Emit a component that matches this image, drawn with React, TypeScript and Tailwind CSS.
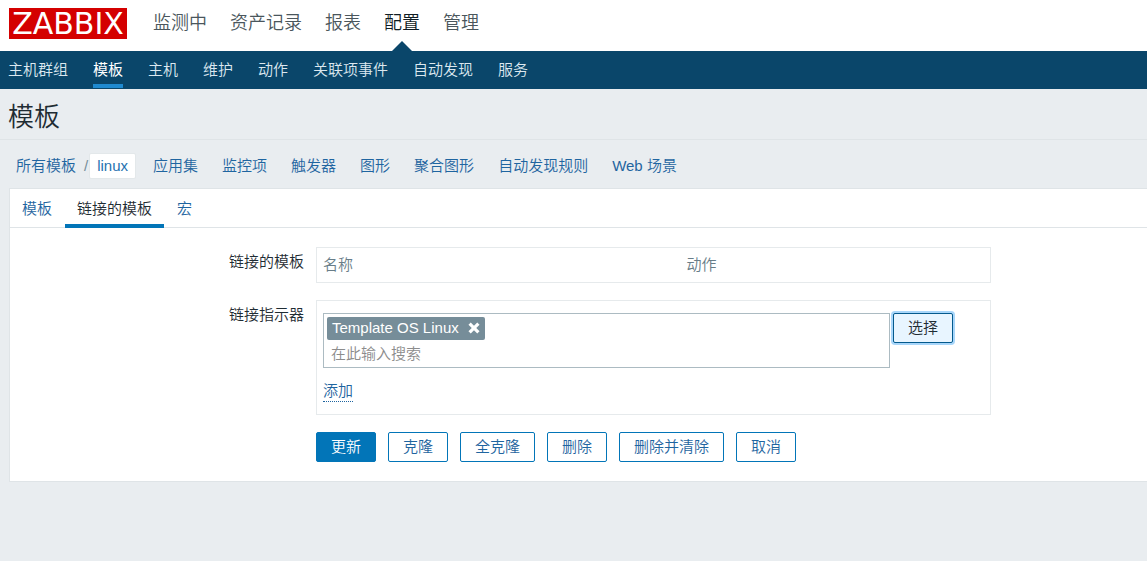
import React, { useState } from 'react';
import clsx from 'clsx';

const mainMenu = ['监测中', '资产记录', '报表', '配置', '管理'];
const subMenu = ['主机群组', '模板', '主机', '维护', '动作', '关联项事件', '自动发现', '服务'];
const templateLinks = ['应用集', '监控项', '触发器', '图形', '聚合图形', '自动发现规则', 'Web 场景'];
const tabs = ['模板', '链接的模板', '宏'];
const actions = ['克隆', '全克隆', '删除', '删除并清除', '取消'];

const Header = () => (
  <header>
    <div className="flex h-[51px] items-start bg-white pl-[9px]">
      <a
        href="#"
        className="mt-2 flex h-[31px] w-[118px] shrink-0 items-center justify-center bg-[#d40000] font-['DejaVu_Sans',sans-serif] text-[30px] leading-none font-normal text-white"
      >
        ZABBIX
      </a>
      <nav className="ml-[26px] flex h-full gap-[23px] text-[18px] leading-[46px] whitespace-nowrap">
        {mainMenu.map((item) => (
          <a
            key={item}
            href="#"
            className={clsx('relative', item === '配置' ? 'text-[#0f1c23]' : 'text-[#4a565c]')}
          >
            {item}
            {item === '配置' && (
              <span className="absolute bottom-0 left-1/2 -ml-[10px] border-x-[10px] border-b-[10px] border-x-transparent border-b-[#0a466a]" />
            )}
          </a>
        ))}
      </nav>
    </div>
    <nav className="flex h-[38px] gap-[25px] bg-[#0a466a] pl-2 leading-[37px] whitespace-nowrap">
      {subMenu.map((item) => (
        <a
          key={item}
          href="#"
          className={clsx(
            'h-[37px] border-b-4',
            item === '模板' ? 'border-[#1f8ad0] font-normal text-white' : 'border-transparent text-[#dce8f0]'
          )}
        >
          {item}
        </a>
      ))}
    </nav>
  </header>
);

const Breadcrumbs = () => (
  <nav className="flex h-[49px] items-center border-t border-[#dfe4e7] pt-1 pl-4 whitespace-nowrap text-[#1f65a0]">
    <a href="#">所有模板</a>
    <span className="ml-2 text-[#768d99]">/</span>
    <a href="#" className="mr-[17px] ml-px rounded-xs border border-[#e3e8ea] bg-white px-[7px] leading-6 text-[#1f72b0]">
      linux
    </a>
    <div className="flex gap-6">
      {templateLinks.map((item) => (
        <a key={item} href="#">
          {item}
        </a>
      ))}
    </div>
  </nav>
);

const buttonClass = 'h-[30px] rounded-xs border px-3.5 leading-7 whitespace-nowrap';

export default function App() {
  const [activeTab, setActiveTab] = useState('链接的模板');
  const [search, setSearch] = useState('');

  return (
    <div className="min-h-screen bg-[#e9edf0] font-['Liberation_Sans','Noto_Sans_CJK_SC',sans-serif] text-[15px] leading-5 font-[350] text-[#1f2c33]">
      <Header />

      <main>
        <h1 className="ml-2 h-[50px] text-[26px] leading-[56px]">模板</h1>
        <Breadcrumbs />

        <section className="ml-[9px] border-y border-l border-[#dfe4e7] bg-white">
          <div role="tablist" className="flex h-[39px] gap-px border-b border-[#dfe4e7]">
            {tabs.map((tab) => (
              <button
                key={tab}
                type="button"
                role="tab"
                aria-selected={tab === activeTab}
                onClick={() => setActiveTab(tab)}
                className={clsx(
                  'h-[39px] border-b-4 px-3 pt-[5px]',
                  tab === activeTab ? 'border-[#0275b8] text-[#1f2c33]' : 'border-transparent text-[#1f65a0]'
                )}
              >
                {tab}
              </button>
            ))}
          </div>

          <form
            onSubmit={(e) => e.preventDefault()}
            className="grid grid-cols-[294px_minmax(0,675px)] gap-x-3 gap-y-[17px] pt-[19px] pb-[19px]"
          >
            <div id="linked-label" className="pt-[5px] text-right">
              链接的模板
            </div>
            <div className="border border-[#e6eaec] px-1.5">
              <table aria-labelledby="linked-label" className="w-full table-fixed text-left text-[#687d88]">
                <thead>
                  <tr className="h-[34px]">
                    <th className="w-[55%] font-[350]">名称</th>
                    <th className="font-[350]">动作</th>
                  </tr>
                </thead>
              </table>
            </div>

            <label htmlFor="template-search" className="pt-[5px] text-right">
              链接指示器
            </label>
            <div className="border border-[#e6eaec] px-1.5 py-3">
              <div className="flex items-start gap-[3px]">
                <div className="w-[567px] min-w-0 border border-[#acbbc2] p-[3px] pb-px">
                  <span className="inline-flex h-[23px] items-center rounded-xs bg-[#768d99] pr-[5px] pb-px pl-[5px] align-top whitespace-nowrap text-white">
                    Template OS Linux
                    <button type="button" aria-label="移除" className="ml-[9px]">
                      <svg viewBox="0 0 12 12" className="size-3" stroke="currentColor" strokeWidth="3.2">
                        <path d="M1.6 1.6 10.4 10.4M10.4 1.6 1.6 10.4" />
                      </svg>
                    </button>
                  </span>
                  <input
                    id="template-search"
                    type="text"
                    value={search}
                    onChange={(e) => setSearch(e.target.value)}
                    placeholder="在此输入搜索"
                    className="block h-[26px] w-full px-1 pt-px outline-none placeholder:text-[#8c8c8c]"
                  />
                </div>
                <button
                  type="button"
                  className={clsx(buttonClass, 'border-[#045a8d] bg-[#e8f5ff] text-[#1f2c33] ring-2 ring-[#a8d6fa]')}
                >
                  选择
                </button>
              </div>
              <button type="button" className="mt-[13px] block border-b border-dotted border-[#1f65a0] text-[#1f65a0]">
                添加
              </button>
            </div>

            <div className="col-start-2 flex gap-3 whitespace-nowrap">
              <button type="submit" className={clsx(buttonClass, 'border-[#0275b8] bg-[#0275b8] text-white')}>
                更新
              </button>
              {actions.map((action) => (
                <button
                  key={action}
                  type="button"
                  className={clsx(buttonClass, 'border-[#0275b8] bg-white text-[#1f65a0]')}
                >
                  {action}
                </button>
              ))}
            </div>
          </form>
        </section>
      </main>
    </div>
  );
}
